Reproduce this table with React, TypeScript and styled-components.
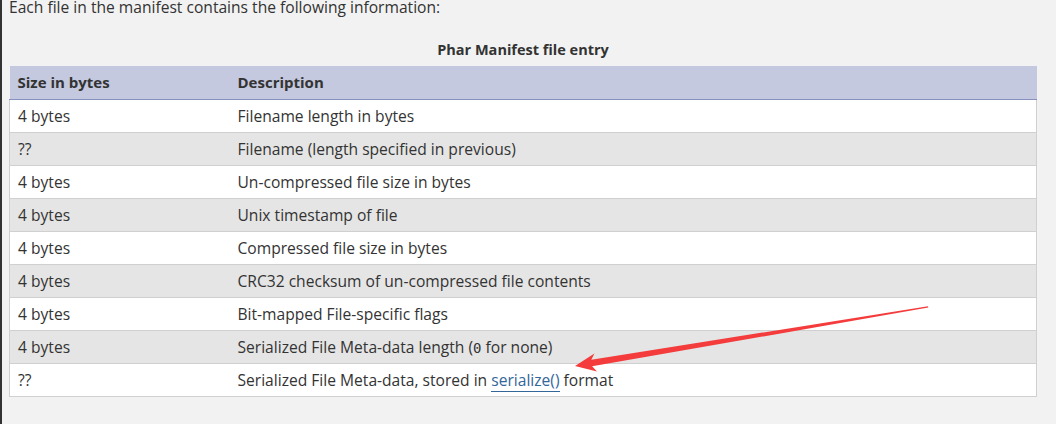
import React from "react";
import styled, { createGlobalStyle } from "styled-components";

const Global = createGlobalStyle`
  html, body { margin: 0; padding: 0; background: #f2f2f2; }
  body { font-family: "Open Sans", "Noto Sans", sans-serif; color: #333; }
`;

const Page = styled.div`
  position: relative;
  width: 1056px;
  height: 424px;
  overflow: hidden;
  box-sizing: border-box;
  border-left: 2px solid #333;
  padding: 0 19px 0 7px;
  display: flex;
  flex-direction: column;
`;

const Intro = styled.p`
  margin: -5px 0 0 0;
  font-size: 15.6px;
  line-height: 24px;
`;

const Table = styled.table`
  margin-top: 21px;
  width: 1028px;
  border-collapse: collapse;
  table-layout: fixed;
  font-size: 15.6px;
`;

const Caption = styled.caption`
  font-weight: 700;
  font-size: 14.5px;
  line-height: 20px;
  padding-bottom: 6px;
  text-align: center;
`;

const Th = styled.th<{ $w?: number }>`
  background: #c4c9df;
  border-bottom: 1px solid #8890bf;
  text-align: left;
  font-weight: 700;
  font-size: 15px;
  height: 33px;
  padding: 0 8px;
  box-sizing: border-box;
  width: ${(p) => (p.$w ? `${p.$w}px` : "auto")};
`;

const Row = styled.tr<{ $alt: boolean }>`
  background: ${(p) => (p.$alt ? "#e5e5e5" : "#ffffff")};
  border-bottom: 1px solid #d0d0d0;
`;

const Td = styled.td`
  height: 33px;
  padding: 0 8px;
  box-sizing: border-box;
  &:first-child { border-left: 1px solid #d0d0d0; }
  &:last-child { border-right: 1px solid #d0d0d0; }
`;

const Code = styled.code`
  font-family: "DejaVu Sans Mono", "Liberation Mono", monospace;
  font-size: 14px;
`;

const Link = styled.a`
  color: #369;
  text-decoration: none;
  border-bottom: 1px solid #369;
`;

const Overlay = styled.svg`
  position: absolute;
  left: -2px;
  top: 0;
  pointer-events: none;
`;

type Entry = { size: string; desc: React.ReactNode };

const rows: Entry[] = [
  { size: "4 bytes", desc: "Filename length in bytes" },
  { size: "??", desc: "Filename (length specified in previous)" },
  { size: "4 bytes", desc: "Un-compressed file size in bytes" },
  { size: "4 bytes", desc: "Unix timestamp of file" },
  { size: "4 bytes", desc: "Compressed file size in bytes" },
  { size: "4 bytes", desc: "CRC32 checksum of un-compressed file contents" },
  { size: "4 bytes", desc: "Bit-mapped File-specific flags" },
  {
    size: "4 bytes",
    desc: (
      <>
        Serialized File Meta-data length (<Code>0</Code> for none)
      </>
    ),
  },
  {
    size: "??",
    desc: (
      <>
        Serialized File Meta-data, stored in <Link href="#">serialize()</Link> format
      </>
    ),
  },
];

export default function App() {
  return (
    <>
      <Global />
      <Page>
        <Intro>Each file in the manifest contains the following information:</Intro>
        <Table>
          <Caption>Phar Manifest file entry</Caption>
          <thead>
            <tr>
              <Th $w={220}>Size in bytes</Th>
              <Th>Description</Th>
            </tr>
          </thead>
          <tbody>
            {rows.map((r, i) => (
              <Row key={i} $alt={i % 2 === 1}>
                <Td>{r.size}</Td>
                <Td>{r.desc}</Td>
              </Row>
            ))}
          </tbody>
        </Table>
        <Overlay width="1056" height="424" viewBox="0 0 1056 424">
          <polygon
            points="575,366 594.4,353.5 591.3,359.8 928,306.3 928.3,307.6 592.1,366.3 597,371.5"
            fill="#f43c3c"
          />
        </Overlay>
      </Page>
    </>
  );
}
